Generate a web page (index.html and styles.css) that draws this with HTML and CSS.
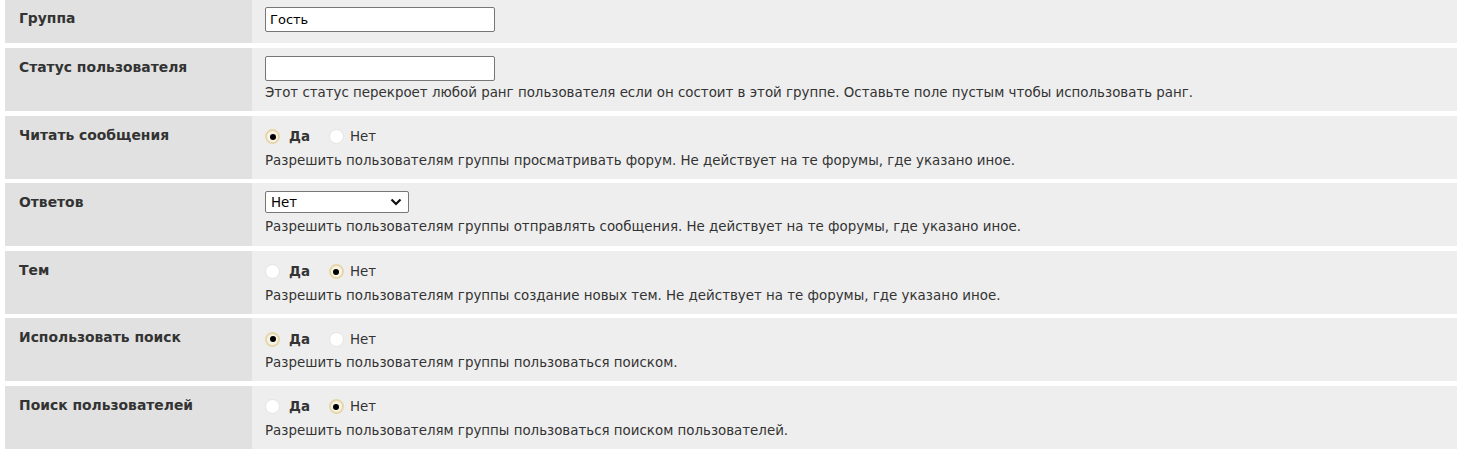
FILE: index.html
```html
<!DOCTYPE html>
<html lang="ru">
<head>
    <meta charset="UTF-8">
    <title>Права группы</title>
    <link rel="stylesheet" href="styles.css">
</head>
<body>
    <div class="form">
        <div class="row short">
            <div class="label">Группа</div>
            <div class="field">
                <input type="text" class="text" value="Гость">
            </div>
        </div>
        <div class="row">
            <div class="label">Статус пользователя</div>
            <div class="field">
                <input type="text" class="text" value="">
                <div class="hint">Этот статус перекроет любой ранг пользователя если он состоит в этой группе. Оставьте поле пустым чтобы использовать ранг.</div>
            </div>
        </div>
        <div class="row">
            <div class="label">Читать сообщения</div>
            <div class="field">
                <div class="choices">
                    <label class="yes"><input type="radio" name="read" checked> Да</label>
                    <label><input type="radio" name="read"> Нет</label>
                </div>
                <div class="hint">Разрешить пользователям группы просматривать форум. Не действует на те форумы, где указано иное.</div>
            </div>
        </div>
        <div class="row">
            <div class="label">Ответов</div>
            <div class="field">
                <div class="select">
                    <span>Нет</span>
                    <svg width="12" height="8" viewBox="0 0 12 8"><path d="M1.5 1.5 L6 6 L10.5 1.5" fill="none" stroke="#111" stroke-width="2.2"/></svg>
                </div>
                <div class="hint">Разрешить пользователям группы отправлять сообщения. Не действует на те форумы, где указано иное.</div>
            </div>
        </div>
        <div class="row">
            <div class="label">Тем</div>
            <div class="field">
                <div class="choices">
                    <label class="yes"><input type="radio" name="topics"> Да</label>
                    <label><input type="radio" name="topics" checked> Нет</label>
                </div>
                <div class="hint">Разрешить пользователям группы создание новых тем. Не действует на те форумы, где указано иное.</div>
            </div>
        </div>
        <div class="row">
            <div class="label">Использовать поиск</div>
            <div class="field">
                <div class="choices">
                    <label class="yes"><input type="radio" name="search" checked> Да</label>
                    <label><input type="radio" name="search"> Нет</label>
                </div>
                <div class="hint">Разрешить пользователям группы пользоваться поиском.</div>
            </div>
        </div>
        <div class="row">
            <div class="label">Поиск пользователей</div>
            <div class="field">
                <div class="choices">
                    <label class="yes"><input type="radio" name="users"> Да</label>
                    <label><input type="radio" name="users" checked> Нет</label>
                </div>
                <div class="hint">Разрешить пользователям группы пользоваться поиском пользователей.</div>
            </div>
        </div>
    </div>
</body>
</html>
```

FILE: styles.css
```css
body {
    margin: 0;
    background: #fff;
    font-family: "DejaVu Sans", Verdana, sans-serif;
    font-size: 13.4px;
    color: #333;
}
.form {
    margin-left: 5px;
    display: flex;
    flex-direction: column;
    gap: 4.6px;
}
.row {
    display: grid;
    grid-template-columns: 247px 1fr;
    height: 63px;
}
.row.short { height: 43px; margin-bottom: 0.4px; }
.label {
    background: #e1e1e1;
    padding: 11px 14px 10px;
    font-weight: bold;
    font-size: 13.9px;
    line-height: 16px;
}
.row.short .label { padding-top: 10px; }
.field {
    background: #eeeeee;
    padding: 8px 13px 0;
}
.row.short .field { padding-top: 7px; }
.text {
    display: block;
    box-sizing: border-box;
    width: 230px;
    height: 25px;
    margin: 0;
    padding: 2px 4px;
    border: 1px solid #767676;
    border-radius: 2px;
    background: #fff;
    font-family: "DejaVu Sans", Verdana, sans-serif;
    font-size: 13px;
    color: #000;
}
.hint {
    margin-top: 4px;
    line-height: 16px;
}
.choices {
    display: flex;
    gap: 19px;
    height: 24px;
    align-items: center;
    padding-top: 1px;
}
.choices label {
    display: flex;
    align-items: center;
}
.choices label.yes { font-weight: bold; }
.choices input {
    appearance: none;
    box-sizing: border-box;
    width: 15px;
    height: 15px;
    margin: 0 9px 0 0;
    border-radius: 50%;
    border: 1px solid #e4e4e4;
    background: #fff;
    position: relative;
}
.choices label + label input { margin-right: 6px; }
.choices input:checked {
    border: 2px solid #e6d6a8;
    background: #f7f3e6;
}
.choices input:checked::after {
    content: "";
    position: absolute;
    left: 2.5px;
    top: 2.5px;
    width: 6px;
    height: 6px;
    border-radius: 50%;
    background: #000;
}
.select {
    box-sizing: border-box;
    width: 144px;
    height: 22px;
    margin-bottom: 6px;
    display: flex;
    align-items: center;
    justify-content: space-between;
    padding: 0 6px 0 5px;
    border: 1px solid #767676;
    border-radius: 2px;
    background: #fff;
    color: #000;
}
```
